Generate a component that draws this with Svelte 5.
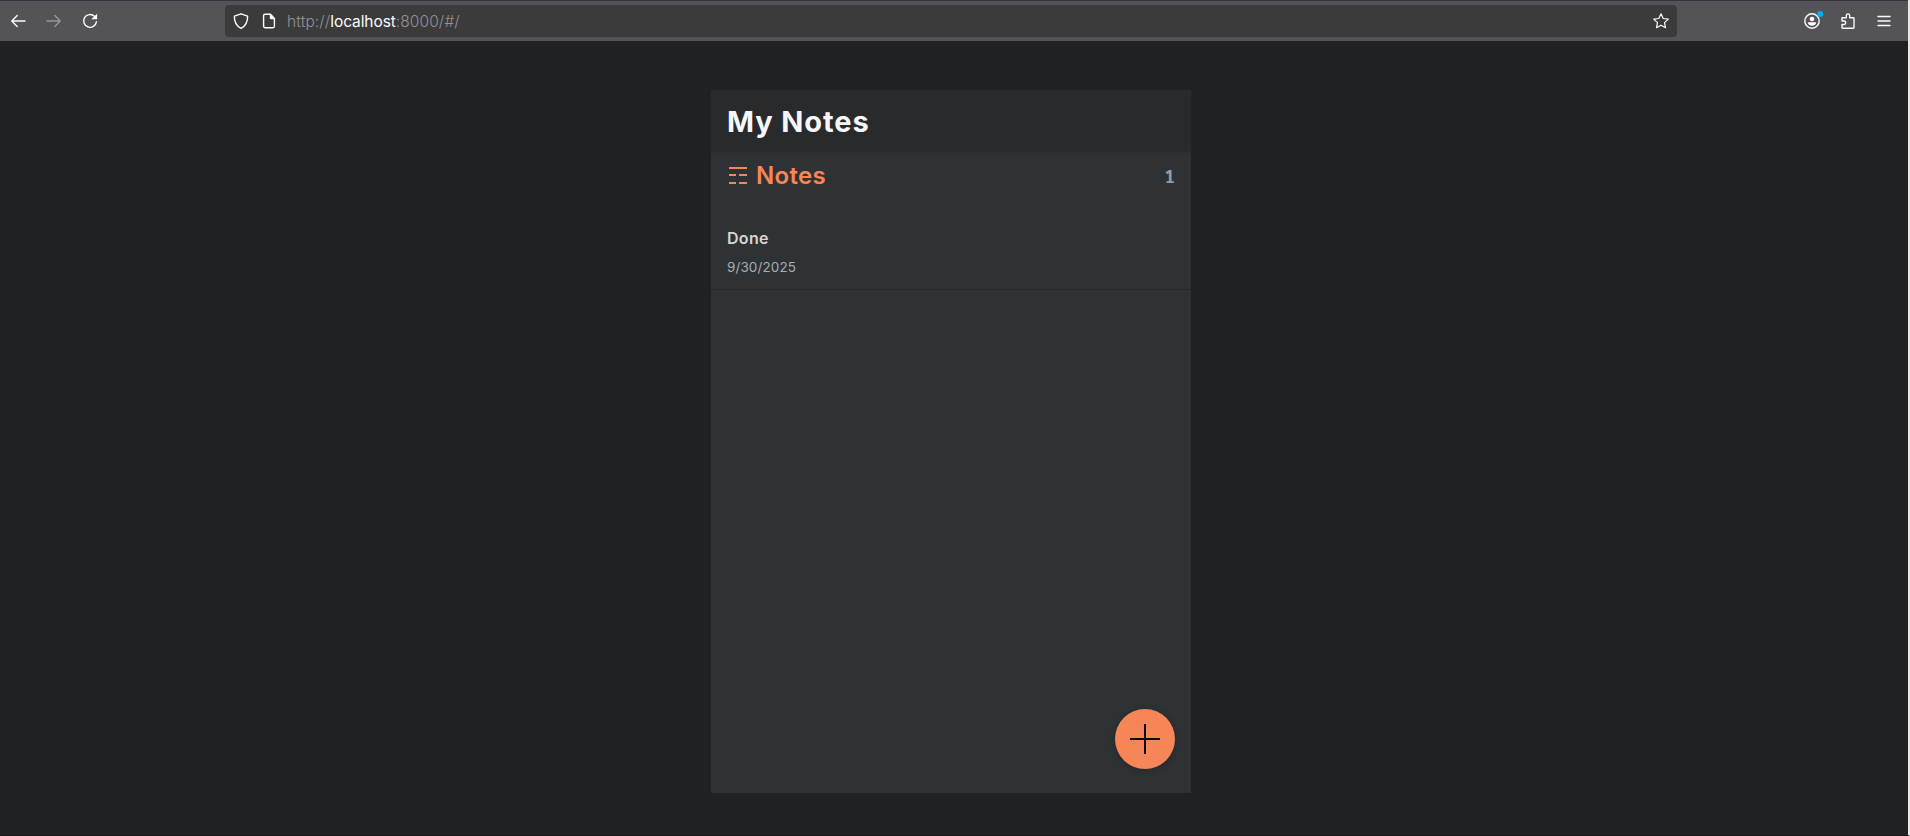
<script>
  const title = 'My Notes';
  const notes = [{ title: 'Done', date: '9/30/2025' }];
</script>

<div class="window">
  <div class="toolbar">
    <div class="nav">
      <svg class="ic" viewBox="0 0 16 16"><path d="M15 8H2M7.2 2.6 1.8 8l5.400 5.400" /></svg>
      <svg class="ic dim" viewBox="0 0 16 16"><path d="M1 8h13M8.800 2.600 14.200 8l-5.400 5.400" /></svg>
      <svg class="ic" viewBox="0 0 16 16"><path d="M12.400 3.200A6.400 6.400 0 1 0 14.400 8.800" /><path class="fill" d="M15.100.8v5.400H9.300z" /></svg>
    </div>
    <div class="field">
      <svg class="ic shield" viewBox="0 0 16 16"><path d="M8 .8 14.600 3.200C14.800 9 12 13.200 8 15.400 4 13.200 1.200 9 1.400 3.200z" /></svg>
      <svg class="ic page-ic" viewBox="0 0 16 16"><path d="M9.500 1.300H4A1.400 1.400 0 0 0 2.600 2.700v10.600A1.400 1.400 0 0 0 4 14.700h8a1.400 1.400 0 0 0 1.400-1.400V5.500z" /><path class="fill" d="M8.800 1 14 6.200H10a1.200 1.200 0 0 1-1.200-1.200z" /></svg>
      <div class="url">http://<b>localhost</b>:8000/#/</div>
      <svg class="ic star" viewBox="0 0 16 16"><path d="m8 .8 2.200 4.700 5.100.6-3.800 3.500 1 5.100L8 12.200l-4.500 2.500 1-5.100L.7 6.100l5.100-.6z" /></svg>
    </div>
    <div class="actions">
      <svg class="ic account" viewBox="0 0 20 16"><circle cx="8" cy="8" r="7.200" /><circle class="fill" cx="8" cy="6" r="2.300" /><path class="fill" d="M3.800 9.300h8.400c0 2-1.900 3.400-4.200 3.400s-4.200-1.400-4.200-3.400z" /><circle class="dot" cx="16.200" cy="1" r="3" /></svg>
      <svg class="ic" viewBox="0 0 16 16"><path d="M2 8V4.700h4.300V2.600a1.700 1.700 0 0 1 3.400 0v2.100h3.600a.7.7 0 0 1 .7.700v9.200a.7.7 0 0 1-.7.700H2.700a.7.7 0 0 1-.7-.7v-3.100h2a1.700 1.700 0 0 0 0-3.500z" /></svg>
      <svg class="ic" viewBox="0 0 16 16"><path d="M2 3.500h12M2 8h12M2 12.500h12" /></svg>
    </div>
  </div>

  <main class="app">
    <header><h1>{title}</h1></header>
    <div class="list-head">
      <svg class="trigram" viewBox="0 0 18 18"><path d="M0 2h18M0 9h7M10 9h8M0 17h7M10 17h8" /></svg>
      <h2>Notes</h2>
      <span class="count">{notes.length}</span>
    </div>
    <div class="list">
      {#each notes as note}
        <div class="note">
          <h3>{note.title}</h3>
          <p>{note.date}</p>
        </div>
      {/each}
    </div>
    <button class="add" aria-label="Add note">
      <svg viewBox="0 0 30 30"><path d="M15 0v30M0 15h30" /></svg>
    </button>
  </main>
</div>

<style>
  :global(body) { margin: 0; background: #202124; }
  .window {
    box-sizing: border-box;
    width: 1910px;
    height: 836px;
    overflow: hidden;
    background: #202124;
    border-right: 2px solid #e8e8e8;
    border-bottom: 1px solid #1c191f;
    font-family: Inter, sans-serif;
  }
  .toolbar {
    box-sizing: border-box;
    height: 41px;
    display: flex;
    align-items: center;
    background: #545358;
    border-top: 1px solid #35343a;
  }
  .ic {
    width: 16px;
    height: 16px;
    flex: none;
    overflow: visible;
    fill: none;
    stroke: #fbfbfe;
    stroke-width: 1.4;
    stroke-linecap: round;
    stroke-linejoin: round;
  }
  .fill { fill: #fbfbfe; stroke: none; }
  .dot { fill: #00aef5; stroke: none; }
  .dim { opacity: 0.4; }
  .star { stroke-width: 1.2; }
  .nav { width: 225px; box-sizing: border-box; padding-left: 10px; display: flex; gap: 20px; }
  .field {
    box-sizing: border-box;
    width: 1452px;
    height: 32px;
    padding: 0 8px;
    border-radius: 4px;
    background: #3b3b3c;
    display: flex;
    align-items: center;
  }
  .page-ic { margin-left: 12px; }
  .url {
    margin-left: 10px;
    padding-top: 1px;
    flex: 1;
    font-size: 15.5px;
    font-weight: 300;
    line-height: 20px;
    letter-spacing: 0.12px;
    color: #929294;
  }
  .url b { font-weight: 400; letter-spacing: -0.1px; color: #fbfbfe; }
  .actions { margin-left: 127px; display: flex; gap: 20px; }
  .account { width: 20px; margin-right: -4px; }

  .app {
    position: relative;
    box-sizing: border-box;
    width: 480px;
    height: 703px;
    margin: 49px 0 0 711px;
    background: #2e3235;
  }
  h1, h2, h3, p { margin: 0; }
  header {
    box-sizing: border-box;
    height: 61px;
    padding: 2px 16px 0;
    display: flex;
    align-items: center;
    background: #292a2b;
    box-shadow: 0 1px 2px #2a2b2c;
  }
  h1 { font-size: 29px; line-height: 40px; font-weight: 700; letter-spacing: 0.9px; color: #f5f6fa; }
  .list-head { height: 49px; padding: 0 17px 0 18px; display: flex; align-items: center; }
  .trigram { width: 18px; height: 18px; margin-bottom: 1px; stroke: #f68657; stroke-width: 2; fill: none; }
  h2 { margin-left: 9px; padding-top: 1px; font-size: 24px; font-weight: 600; line-height: 32px; letter-spacing: 0.3px; color: #f68657; }
  .count { margin-left: auto; font-family: "Noto Sans Mono", "DejaVu Sans Mono", monospace; font-size: 17.5px; font-weight: 700; line-height: 24px; margin-right: -1px; color: #9a9b9c; }
  .note { height: 90px; padding: 18px 16px 0; box-sizing: border-box; border-bottom: 1px solid #25282a; }
  .note h3 { font-size: 16px; line-height: 40px; font-weight: 600; letter-spacing: 0.3px; color: #d8d4d1; }
  .note p { font-size: 13.5px; line-height: 18px; letter-spacing: 0.1px; color: #a6adb8; }
  .add {
    position: absolute;
    right: 16px;
    bottom: 24px;
    width: 60px;
    height: 60px;
    padding: 0;
    border: 0;
    border-radius: 50%;
    background: #f68657;
    box-shadow: 0 1px 6px rgba(0, 0, 0, 0.22);
    display: flex;
    align-items: center;
    justify-content: center;
  }
  .add svg { width: 30px; height: 30px; stroke: #0a0a0a; stroke-width: 2; }
</style>
